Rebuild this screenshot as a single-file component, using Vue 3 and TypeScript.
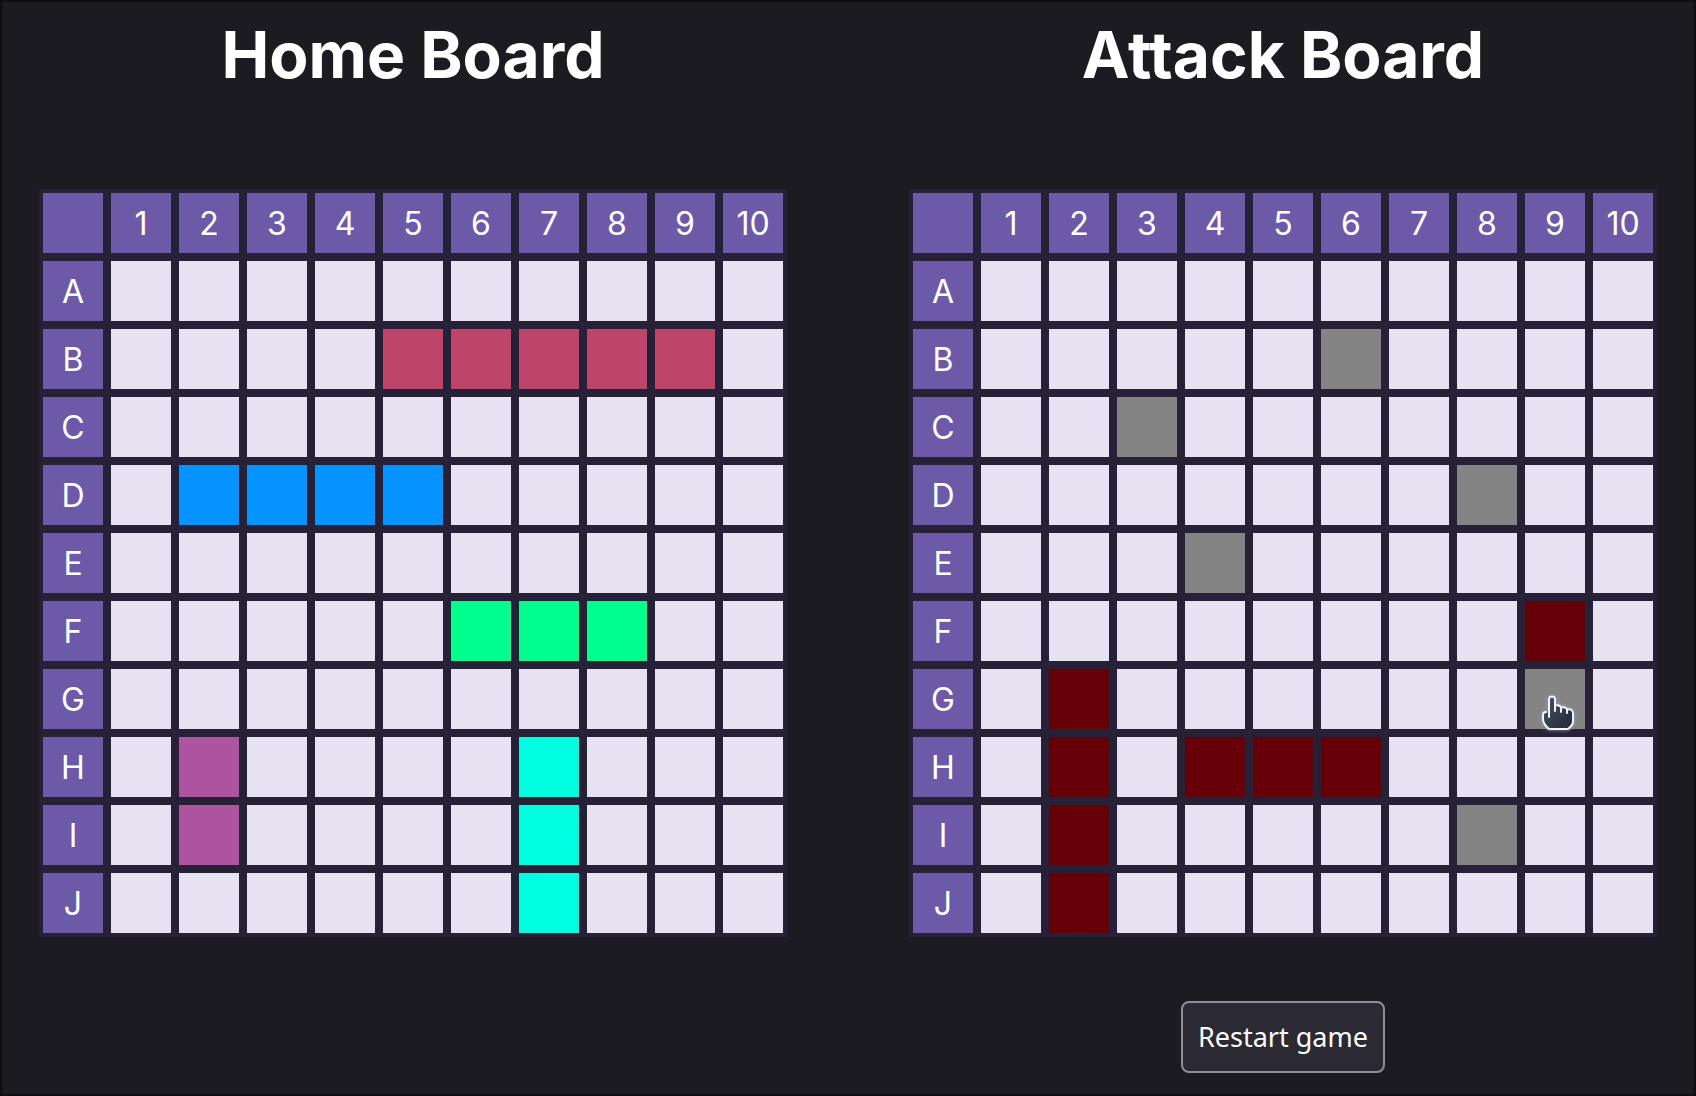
<script setup lang="ts">
type Cells = Record<string, string>

interface Board {
  title: string
  label: string
  cells: Cells
  playable: boolean
}

const columns = [1, 2, 3, 4, 5, 6, 7, 8, 9, 10]
const rows = ['A', 'B', 'C', 'D', 'E', 'F', 'G', 'H', 'I', 'J']

function paint(groups: Record<string, string[]>): Cells {
  const cells: Cells = {}
  for (const [kind, keys] of Object.entries(groups)) {
    for (const key of keys) cells[key] = kind
  }
  return cells
}

const boards: Board[] = [
  {
    title: 'Home Board',
    label: 'home',
    playable: false,
    cells: paint({
      carrier: ['B5', 'B6', 'B7', 'B8', 'B9'],
      battleship: ['D2', 'D3', 'D4', 'D5'],
      cruiser: ['F6', 'F7', 'F8'],
      submarine: ['H7', 'I7', 'J7'],
      destroyer: ['H2', 'I2'],
    }),
  },
  {
    title: 'Attack Board',
    label: 'attack',
    playable: true,
    cells: paint({
      hit: ['F9', 'G2', 'H2', 'I2', 'J2', 'H4', 'H5', 'H6'],
      miss: ['B6', 'C3', 'D8', 'E4', 'G9', 'I8'],
    }),
  },
]

const pointerAt = 'G9'
</script>

<template>
  <main class="game">
    <section v-for="board in boards" :key="board.label" class="side">
      <h1 :id="board.label" class="title">{{ board.title }}</h1>
      <table class="board" :aria-labelledby="board.label">
        <thead>
          <tr>
            <td class="cell head"></td>
            <th v-for="c in columns" :key="c" class="cell head" scope="col">{{ c }}</th>
          </tr>
        </thead>
        <tbody>
          <tr v-for="r in rows" :key="r">
            <th class="cell head" scope="row">{{ r }}</th>
            <td v-for="c in columns" :key="c" class="cell" :class="board.cells[r + c]">
              <svg
                v-if="board.playable && r + c === pointerAt"
                class="pointer"
                viewBox="0 0 40 44"
                width="40"
                height="44"
                aria-hidden="true"
              >
                <defs>
                  <linearGradient id="hand" x1="0" y1="0" x2="1" y2="1">
                    <stop offset="0" stop-color="#4a5261" />
                    <stop offset="1" stop-color="#202733" />
                  </linearGradient>
                </defs>
                <path
                  d="M11 22V9.500a3 3 0 0 1 6 0V15.500q5 -1 6 2q5 -1 6 2q6 -1 6 4V31q0 4 -3 6q-1 2 -3 2H12q-2 0 -3 -2q-4 -4 -4 -8V25q0 -3 3 -3z"
                  fill="url(#hand)"
                  stroke="#f1f3fa"
                  stroke-width="2"
                  stroke-linejoin="round"
                />
                <path d="M9 22h2" stroke="#464e5d" stroke-width="2" />
                <path d="M11 20v7M17 15v6M23 17v5M29 19v4" fill="none" stroke="#f1f3fa" stroke-width="2" stroke-linecap="round" />
              </svg>
            </td>
          </tr>
        </tbody>
      </table>
      <button v-if="board.playable" type="button" class="restart">Restart game</button>
    </section>
  </main>
</template>

<style>
body {
  margin: 0;
  background: #1c1b22;
}
</style>

<style scoped>
.game {
  box-sizing: border-box;
  min-height: 100vh;
  padding: 0 37px;
  border: 2px solid #0e0e11;
  display: flex;
  justify-content: space-between;
  align-items: flex-start;
  background: #1c1b22;
  color: #ffffff;
  font-family: Inter, "Liberation Sans", sans-serif;
}

.side {
  display: flex;
  flex-direction: column;
  align-items: center;
}

.title {
  margin: 15px 0 96px;
  font-size: 64px;
  line-height: 76px;
  font-weight: 700;
  font-variant-ligatures: none;
}

.board {
  border-collapse: separate;
  border-spacing: 0;
  table-layout: fixed;
}

.cell {
  position: relative;
  box-sizing: border-box;
  width: 68px;
  height: 68px;
  padding: 0;
  border: 4px solid #262136;
  background: #e6e2f1;
}

.head {
  padding-top: 2px;
  background: #6c5aa9;
  font-size: 32px;
  line-height: 58px;
  font-weight: 400;
  text-align: center;
}

.carrier { background: #bd456b; }
.battleship { background: #0594ff; }
.cruiser { background: #00ff8c; }
.submarine { background: #00ffe1; }
.destroyer { background: #ae539f; }
.hit { background: #660008; }
.miss { background: #848484; }

.pointer {
  position: absolute;
  left: 13px;
  top: 21px;
  z-index: 1;
  filter: drop-shadow(0 0 2px #9a9eaa);
}

.restart {
  margin-top: 64px;
  height: 72px;
  padding: 0 15px;
  border: 2px solid #8f8d9a;
  border-radius: 8px;
  background: #2b2a33;
  color: #fbfbfe;
  font-family: "Noto Sans", sans-serif;
  font-size: 27px;
  line-height: 36px;
  cursor: pointer;
}
</style>
